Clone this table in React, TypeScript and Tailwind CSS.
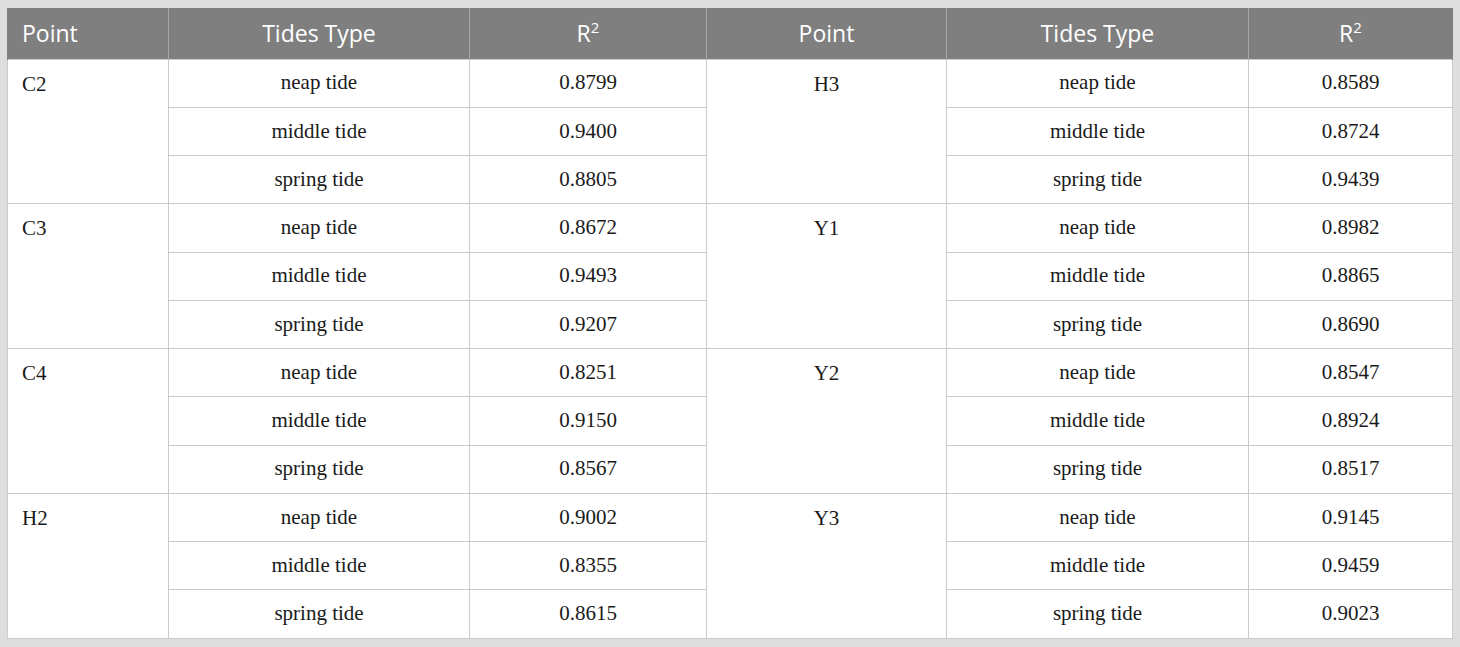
import React from 'react';

const left = [
  { point: 'C2', rows: [['neap tide', '0.8799'], ['middle tide', '0.9400'], ['spring tide', '0.8805']] },
  { point: 'C3', rows: [['neap tide', '0.8672'], ['middle tide', '0.9493'], ['spring tide', '0.9207']] },
  { point: 'C4', rows: [['neap tide', '0.8251'], ['middle tide', '0.9150'], ['spring tide', '0.8567']] },
  { point: 'H2', rows: [['neap tide', '0.9002'], ['middle tide', '0.8355'], ['spring tide', '0.8615']] },
];

const right = [
  { point: 'H3', rows: [['neap tide', '0.8589'], ['middle tide', '0.8724'], ['spring tide', '0.9439']] },
  { point: 'Y1', rows: [['neap tide', '0.8982'], ['middle tide', '0.8865'], ['spring tide', '0.8690']] },
  { point: 'Y2', rows: [['neap tide', '0.8547'], ['middle tide', '0.8924'], ['spring tide', '0.8517']] },
  { point: 'Y3', rows: [['neap tide', '0.9145'], ['middle tide', '0.9459'], ['spring tide', '0.9023']] },
];

const th = 'border-x border-[#a6a6a6] font-normal text-white text-[23px] px-[14px] py-0';
const td = 'border border-[#cbcbcb] text-center text-[21px] text-[#1a1a1a] py-0';

export default function App() {
  return (
    <div className="w-[1460px] h-[647px] bg-[#dedede] pt-[8px] pl-[7px]">
      <table
        className="w-[1445px] table-fixed border-collapse bg-white"
        style={{ fontFamily: '"Liberation Serif", serif' }}
      >
        <colgroup>
          <col className="w-[161px]" />
          <col className="w-[301px]" />
          <col className="w-[237px]" />
          <col className="w-[240px]" />
          <col className="w-[302px]" />
          <col className="w-[204px]" />
        </colgroup>
        <thead>
          <tr className="h-[51px] bg-[#7f7f7f]" style={{ fontFamily: '"Open Sans", sans-serif' }}>
            <th className={`${th} text-left border-l-[#7f7f7f]`}>Point</th>
            <th className={`${th} text-center`}>Tides Type</th>
            <th className={`${th} text-center`}>
              R<sup className="text-[15px] -top-[9px]">2</sup>
            </th>
            <th className={`${th} text-center`}>Point</th>
            <th className={`${th} text-center`}>Tides Type</th>
            <th className={`${th} text-center border-r-[#7f7f7f]`}>
              R<sup className="text-[15px] -top-[9px]">2</sup>
            </th>
          </tr>
        </thead>
        <tbody>
          {left.map((g, gi) =>
            g.rows.map((r, ri) => {
              const rg = right[gi];
              return (
                <tr key={`${gi}-${ri}`} className="h-[48.25px]">
                  {ri === 0 && (
                    <td rowSpan={3} className={`${td} text-left align-top pl-[14px] pt-[9px]`}>
                      {g.point}
                    </td>
                  )}
                  <td className={td}>{r[0]}</td>
                  <td className={td}>{r[1]}</td>
                  {ri === 0 && (
                    <td rowSpan={3} className={`${td} align-top pt-[9px]`}>
                      {rg.point}
                    </td>
                  )}
                  <td className={td}>{rg.rows[ri][0]}</td>
                  <td className={td}>{rg.rows[ri][1]}</td>
                </tr>
              );
            })
          )}
        </tbody>
      </table>
    </div>
  );
}
